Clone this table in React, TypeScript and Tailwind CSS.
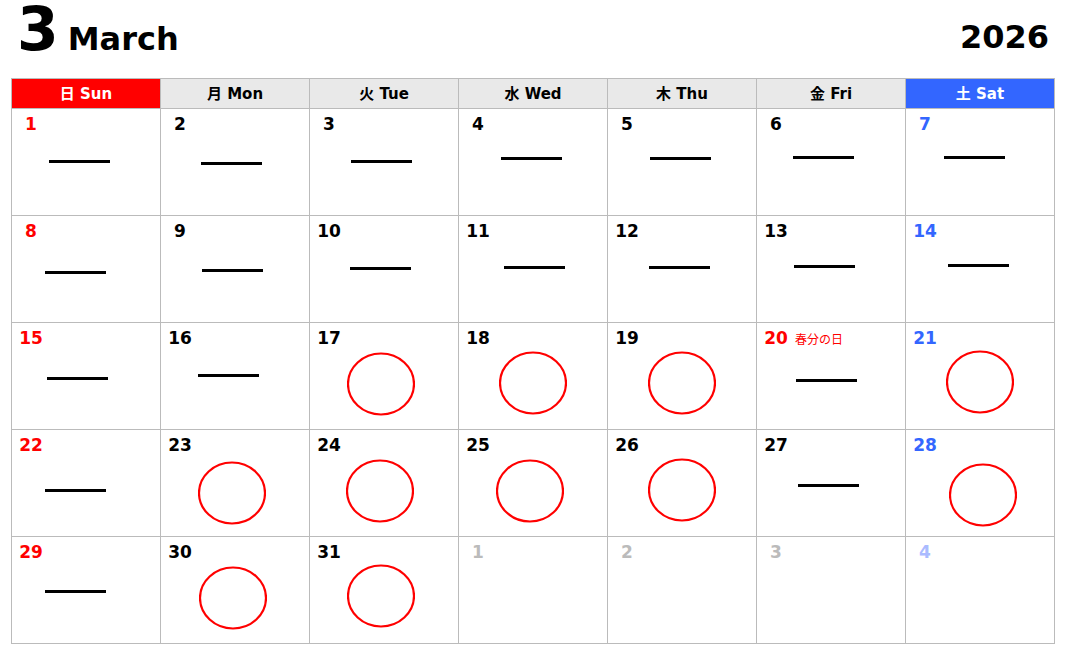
type Mark = "dash" | "circle" | null;

type Day = {
  n: number;
  color: string;
  mark: Mark;
  pos: string;
  label?: string;
};

const RED = "text-[#ff0000]";
const BLUE = "text-[#3366ff]";
const BLACK = "text-black";

const days: Day[] = [
  { n: 1, color: RED, mark: "dash", pos: "ml-[37px] mt-[51px]" },
  { n: 2, color: BLACK, mark: "dash", pos: "ml-[40px] mt-[53px]" },
  { n: 3, color: BLACK, mark: "dash", pos: "ml-[41px] mt-[51px]" },
  { n: 4, color: BLACK, mark: "dash", pos: "ml-[42px] mt-[48px]" },
  { n: 5, color: BLACK, mark: "dash", pos: "ml-[42px] mt-[48px]" },
  { n: 6, color: BLACK, mark: "dash", pos: "ml-[36px] mt-[47px]" },
  { n: 7, color: BLUE, mark: "dash", pos: "ml-[38px] mt-[47px]" },
  { n: 8, color: RED, mark: "dash", pos: "ml-[33px] mt-[55px]" },
  { n: 9, color: BLACK, mark: "dash", pos: "ml-[41px] mt-[53px]" },
  { n: 10, color: BLACK, mark: "dash", pos: "ml-[40px] mt-[51px]" },
  { n: 11, color: BLACK, mark: "dash", pos: "ml-[45px] mt-[50px]" },
  { n: 12, color: BLACK, mark: "dash", pos: "ml-[41px] mt-[50px]" },
  { n: 13, color: BLACK, mark: "dash", pos: "ml-[37px] mt-[49px]" },
  { n: 14, color: BLUE, mark: "dash", pos: "ml-[42px] mt-[48px]" },
  { n: 15, color: RED, mark: "dash", pos: "ml-[35px] mt-[54px]" },
  { n: 16, color: BLACK, mark: "dash", pos: "ml-[37px] mt-[51px]" },
  { n: 17, color: BLACK, mark: "circle", pos: "ml-[37px] mt-[29px]" },
  { n: 18, color: BLACK, mark: "circle", pos: "ml-[40px] mt-[28px]" },
  { n: 19, color: BLACK, mark: "circle", pos: "ml-[40px] mt-[28px]" },
  { n: 20, color: RED, mark: "dash", pos: "ml-[39px] mt-[56px]", label: "春分の日" },
  { n: 21, color: BLUE, mark: "circle", pos: "ml-[40px] mt-[27px]" },
  { n: 22, color: RED, mark: "dash", pos: "ml-[33px] mt-[59px]" },
  { n: 23, color: BLACK, mark: "circle", pos: "ml-[37px] mt-[31px]" },
  { n: 24, color: BLACK, mark: "circle", pos: "ml-[36px] mt-[29px]" },
  { n: 25, color: BLACK, mark: "circle", pos: "ml-[37px] mt-[29px]" },
  { n: 26, color: BLACK, mark: "circle", pos: "ml-[40px] mt-[28px]" },
  { n: 27, color: BLACK, mark: "dash", pos: "ml-[41px] mt-[54px]" },
  { n: 28, color: BLUE, mark: "circle", pos: "ml-[43px] mt-[33px]" },
  { n: 29, color: RED, mark: "dash", pos: "ml-[33px] mt-[53px]" },
  { n: 30, color: BLACK, mark: "circle", pos: "ml-[38px] mt-[29px]" },
  { n: 31, color: BLACK, mark: "circle", pos: "ml-[37px] mt-[27px]" },
  { n: 1, color: "text-[#bbbbbb]", mark: null, pos: "" },
  { n: 2, color: "text-[#bbbbbb]", mark: null, pos: "" },
  { n: 3, color: "text-[#bbbbbb]", mark: null, pos: "" },
  { n: 4, color: "text-[#aabbff]", mark: null, pos: "" },
];

const heads = [
  { jp: "日", en: "Sun", cls: "bg-[#ff0000] text-white" },
  { jp: "月", en: "Mon", cls: "bg-[#e9e9e9] text-black" },
  { jp: "火", en: "Tue", cls: "bg-[#e9e9e9] text-black" },
  { jp: "水", en: "Wed", cls: "bg-[#e9e9e9] text-black" },
  { jp: "木", en: "Thu", cls: "bg-[#e9e9e9] text-black" },
  { jp: "金", en: "Fri", cls: "bg-[#e9e9e9] text-black" },
  { jp: "土", en: "Sat", cls: "bg-[#3366ff] text-white" },
];

function Dash() {
  return <div className="w-[61px] h-[3px] bg-black" />;
}

function Circle() {
  return (
    <svg width="68" height="64" viewBox="0 0 68 64">
      <ellipse cx="34" cy="32" rx="33" ry="30.5" fill="none" stroke="#ff0000" strokeWidth="2.2" />
    </svg>
  );
}

function Cell({ day }: { day: Day }) {
  return (
    <div className="grid h-[107px] border-r border-b border-[#bbbbbb]">
      <div className="col-start-1 row-start-1 flex items-baseline pt-[3px]">
        <div className={`w-[30px] ml-[4px] text-center text-[17px] leading-[24px] font-bold ${day.color}`}>
          {day.n}
        </div>
        {day.label && (
          <div className="ml-[4px] text-[12px] text-[#ff0000]">{day.label}</div>
        )}
      </div>
      {day.mark && (
        <div className={`col-start-1 row-start-1 self-start justify-self-start ${day.pos}`}>
          {day.mark === "dash" ? <Dash /> : <Circle />}
        </div>
      )}
    </div>
  );
}

export default function App() {
  return (
    <div
      className="w-[1065px] h-[655px] bg-white overflow-hidden"
      style={{ fontFamily: '"DejaVu Sans", "Noto Sans CJK JP", sans-serif' }}
    >
      <div className="h-[78px] flex justify-between pl-[17px] pr-[16px]">
        <div className="flex items-baseline pt-[1px]">
          <span className="text-[60px] leading-[56px] font-bold">3</span>
          <span className="ml-[9px] text-[32px] leading-[40px] font-bold">March</span>
        </div>
        <div className="pt-[19px] text-[32px] leading-[36px] font-bold">2026</div>
      </div>
      <div className="ml-[11px] w-[1044px] grid grid-cols-7 border-l border-t border-[#bbbbbb]">
        {heads.map((h) => (
          <div
            key={h.en}
            className={`h-[30px] flex items-center justify-center pt-[2px] border-r border-b border-[#bbbbbb] text-[15px] font-bold ${h.cls}`}
          >
            {h.jp} {h.en}
          </div>
        ))}
        {days.map((d, i) => (
          <Cell key={i} day={d} />
        ))}
      </div>
    </div>
  );
}
